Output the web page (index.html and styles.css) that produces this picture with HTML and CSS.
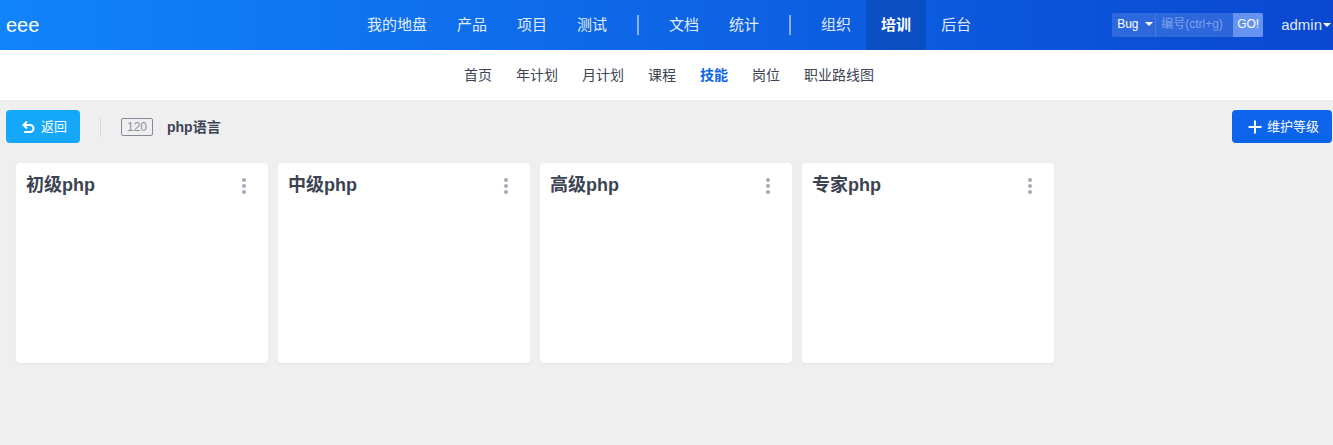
FILE: index.html
```html
<!DOCTYPE html>
<html lang="zh">
<head>
<meta charset="utf-8">
<title>技能</title>
<link rel="stylesheet" href="styles.css">
</head>
<body>
<header class="header">
  <a class="brand">eee</a>
  <nav class="nav">
    <a class="nav-item">我的地盘</a>
    <a class="nav-item">产品</a>
    <a class="nav-item">项目</a>
    <a class="nav-item">测试</a>
    <span class="nav-divider"></span>
    <a class="nav-item">文档</a>
    <a class="nav-item">统计</a>
    <span class="nav-divider"></span>
    <a class="nav-item">组织</a>
    <a class="nav-item active">培训</a>
    <a class="nav-item">后台</a>
  </nav>
  <div class="tools">
    <div class="search">
      <span class="search-type">Bug<i class="caret"></i></span>
      <span class="search-input">编号(ctrl+g)</span>
      <span class="search-go">GO!</span>
    </div>
    <a class="user">admin<i class="caret"></i></a>
  </div>
</header>
<nav class="subnav">
  <a>首页</a>
  <a>年计划</a>
  <a>月计划</a>
  <a>课程</a>
  <a class="active">技能</a>
  <a>岗位</a>
  <a>职业路线图</a>
</nav>
<main class="main">
  <div class="toolbar">
    <a class="btn btn-back">
      <svg class="btn-icon" viewBox="0 0 14 14" width="14" height="14"><path d="M6 1.5 2.5 5 6 8.5M2.5 5h6.5a3.5 3.5 0 0 1 0 7H3" fill="none" stroke="#fff" stroke-width="2"/></svg>
      返回
    </a>
    <span class="toolbar-divider"></span>
    <span class="label">120</span>
    <strong class="title">php语言</strong>
    <a class="btn btn-primary">
      <svg class="btn-icon btn-icon-add" viewBox="0 0 14 14" width="14" height="14"><path d="M7 .5v13M.5 7h13" fill="none" stroke="#fff" stroke-width="2"/></svg>
      维护等级
    </a>
  </div>
  <div class="cards">
    <section class="card"><h3>初级php</h3><span class="dots"><i></i><i></i><i></i></span></section>
    <section class="card"><h3>中级php</h3><span class="dots"><i></i><i></i><i></i></span></section>
    <section class="card"><h3>高级php</h3><span class="dots"><i></i><i></i><i></i></span></section>
    <section class="card"><h3>专家php</h3><span class="dots"><i></i><i></i><i></i></span></section>
  </div>
</main>
</body>
</html>
```
FILE: styles.css
```css
* { box-sizing: border-box; }
html, body { margin: 0; height: 100%; }
body {
  font-family: "Liberation Sans", "Noto Sans CJK SC", sans-serif;
  font-size: 13px;
  color: #3c4353;
  background: #efefef;
  overflow: hidden;
}
.header {
  height: 50px;
  display: flex;
  align-items: center;
  color: #fff;
  background: linear-gradient(90deg, #1183fb 0%, #0a48d1 100%);
}
.brand {
  flex: 0 0 352px;
  padding-left: 6px;
  font-size: 20px;
}
.nav { display: flex; align-items: center; height: 50px; }
.nav-item {
  height: 50px;
  line-height: 49px;
  padding: 0 15px;
  font-size: 15px;
  color: rgba(255, 255, 255, .9);
}
.nav-item.active {
  font-weight: 700;
  color: #fff;
  background: rgba(0, 0, 0, .12);
}
.nav-divider {
  width: 2px;
  height: 20px;
  margin: 0 15px;
  background: rgba(255, 255, 255, .5);
}
.tools {
  margin-left: auto;
  display: flex;
  align-items: center;
}
.search {
  display: flex;
  height: 24px;
  border-radius: 2px;
  overflow: hidden;
  font-size: 12px;
  line-height: 23px;
  background: rgba(255, 255, 255, .14);
}
.search-type {
  width: 44px;
  padding-left: 5px;
  border-right: 1px solid rgba(255, 255, 255, .12);
}
.search-input {
  width: 77px;
  padding-left: 5px;
  color: rgba(255, 255, 255, .4);
}
.search-go {
  width: 30px;
  text-align: center;
  background: #6493f2;
}
.caret {
  display: inline-block;
  margin-left: 6px;
  vertical-align: 2px;
  border-top: 4px solid #fff;
  border-left: 4px solid transparent;
  border-right: 4px solid transparent;
}
.user {
  margin-left: 18px;
  padding-bottom: 1px;
  font-size: 15px;
  color: rgba(255, 255, 255, .9);
}
.user .caret { margin-left: 1px; margin-right: 2px; vertical-align: 3px; }
.subnav {
  height: 50px;
  display: flex;
  align-items: center;
  justify-content: center;
  gap: 24px;
  padding: 0 0 2px 5px;
  background: #fff;
  font-size: 14px;
  color: #3c4353;
}
.subnav .active { font-weight: 700; color: #0c64eb; }
.main { padding: 10px 1px 0 6px; }
.toolbar {
  display: flex;
  align-items: center;
  height: 33px;
}
.btn {
  height: 33px;
  display: flex;
  align-items: center;
  padding-bottom: 3px;
  border-radius: 4px;
  color: #fff;
  font-size: 13px;
}
.btn-icon { margin: 3px 6px 0 0; }
.btn-icon-add { margin-right: 5px; }
.btn-back {
  width: 74px;
  padding-left: 15px;
  background: #16a8f8;
}
.btn-primary {
  width: 100px;
  margin-left: auto;
  padding-left: 16px;
  background: #0c64eb;
}
.toolbar-divider {
  width: 1px;
  height: 20px;
  margin: 0 20px;
  background: #d9d9d9;
}
.label {
  width: 32px;
  height: 18px;
  border: 1px solid #838a9d;
  border-radius: 2px;
  color: #8b909f;
  font-size: 12px;
  line-height: 16px;
  text-align: center;
}
.title { margin: 0 0 2px 14px; font-size: 14px; }
.cards {
  display: flex;
  gap: 10px;
  margin-top: 20px;
  padding-left: 10px;
}
.card {
  position: relative;
  width: 252px;
  height: 200px;
  padding: 9px 10px;
  background: #fff;
  border-radius: 4px;
  box-shadow: 0 1px 2px rgba(0, 0, 0, .05);
}
.card h3 {
  margin: 0;
  font-size: 18px;
  line-height: 26px;
  font-weight: 700;
}
.dots {
  position: absolute;
  top: 15px;
  right: 22px;
  display: flex;
  flex-direction: column;
  gap: 2px;
}
.dots i {
  width: 4px;
  height: 4px;
  border-radius: 50%;
  background: #a6aab8;
}
```
